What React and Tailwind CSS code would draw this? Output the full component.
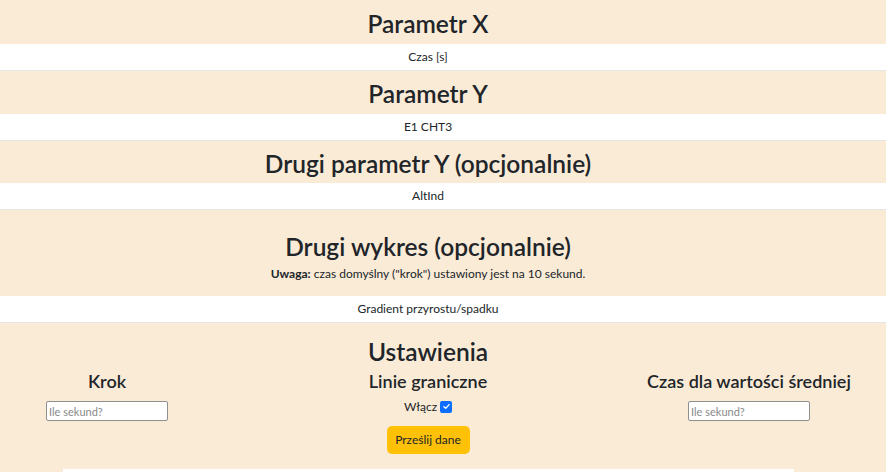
import React from 'react';

function Heading({ title, h = 'h-[44px]' }) {
  return (
    <div className={`bg-[#faebd7] ${h}`}>
      <div className="w-[856px] h-full flex flex-col items-center justify-center">
        <h2 className="text-[24.5px] leading-none font-semibold pt-[4px]">{title}</h2>
      </div>
    </div>
  );
}

function Value({ text }) {
  return (
    <div className="bg-white h-[27px] border-b border-[#e5e5e5]">
      <div className="w-[856px] h-full flex items-center justify-center text-[12px]">{text}</div>
    </div>
  );
}

function SecInput() {
  return (
    <input
      type="text"
      placeholder="Ile sekund?"
      className="w-[122px] h-[20px] bg-white border border-[#8f8f8f] rounded-[2px] px-[2px] text-[11px] placeholder:text-[#8a8a8a] outline-none"
    />
  );
}

export default function App() {
  return (
    <div
      className="w-[886px] h-[472px] overflow-hidden bg-[#faebd7] text-[#212529]"
      style={{ fontFamily: 'Lato, "Noto Sans", sans-serif' }}
    >
      <Heading title="Parametr X" />
      <Value text="Czas [s]" />
      <Heading title="Parametr Y" h="h-[43px]" />
      <Value text="E1 CHT3" />
      <Heading title="Drugi parametr Y (opcjonalnie)" h="h-[42px]" />
      <Value text="AltInd" />
      <div className="bg-[#faebd7] h-[86px]">
        <div className="w-[856px] flex flex-col items-center pt-[25px]">
          <h2 className="text-[24.5px] leading-none font-semibold">Drugi wykres (opcjonalnie)</h2>
          <p className="text-[12px] leading-[18px] mt-[5px]">
            <b className="font-bold">Uwaga:</b> czas domyślny ("krok") ustawiony jest na 10 sekund.
          </p>
        </div>
      </div>
      <Value text="Gradient przyrostu/spadku" />
      <div className="bg-[#faebd7] pt-[17px]">
        <div className="w-[856px] flex flex-col items-center">
          <h2 className="text-[24.5px] leading-none font-semibold">Ustawienia</h2>
          <div className="w-full grid grid-cols-[214px_428px_214px] mt-[7px]">
            <div className="flex flex-col items-center">
              <h4 className="text-[18px] leading-none font-semibold">Krok</h4>
              <div className="mt-[8px]"><SecInput /></div>
            </div>
            <div className="flex flex-col items-center">
              <h4 className="text-[18px] leading-none font-semibold">Linie graniczne</h4>
              <label className="mt-[8px] flex items-center gap-[3px] text-[12px]">
                Włącz
                <span className="w-[12px] h-[12px] rounded-[2px] bg-[#0d6efd] flex items-center justify-center">
                  <svg viewBox="0 0 12 12" className="w-[9px] h-[9px]">
                    <path d="M2.5 6.2 L5 8.5 L9.5 3.5" fill="none" stroke="white" strokeWidth="1.8" strokeLinecap="round" strokeLinejoin="round" />
                  </svg>
                </span>
              </label>
              <button className="mt-[10px] h-[28px] w-[83px] rounded-[5px] bg-[#ffc107] text-[12px] text-[#212529]">
                Prześlij dane
              </button>
            </div>
            <div className="flex flex-col items-center">
              <h4 className="text-[18px] leading-none font-semibold whitespace-nowrap">Czas dla wartości średniej</h4>
              <div className="mt-[8px]"><SecInput /></div>
            </div>
          </div>
          <div className="mt-[15px] w-[731px] h-[40px] bg-white"></div>
        </div>
      </div>
    </div>
  );
}
